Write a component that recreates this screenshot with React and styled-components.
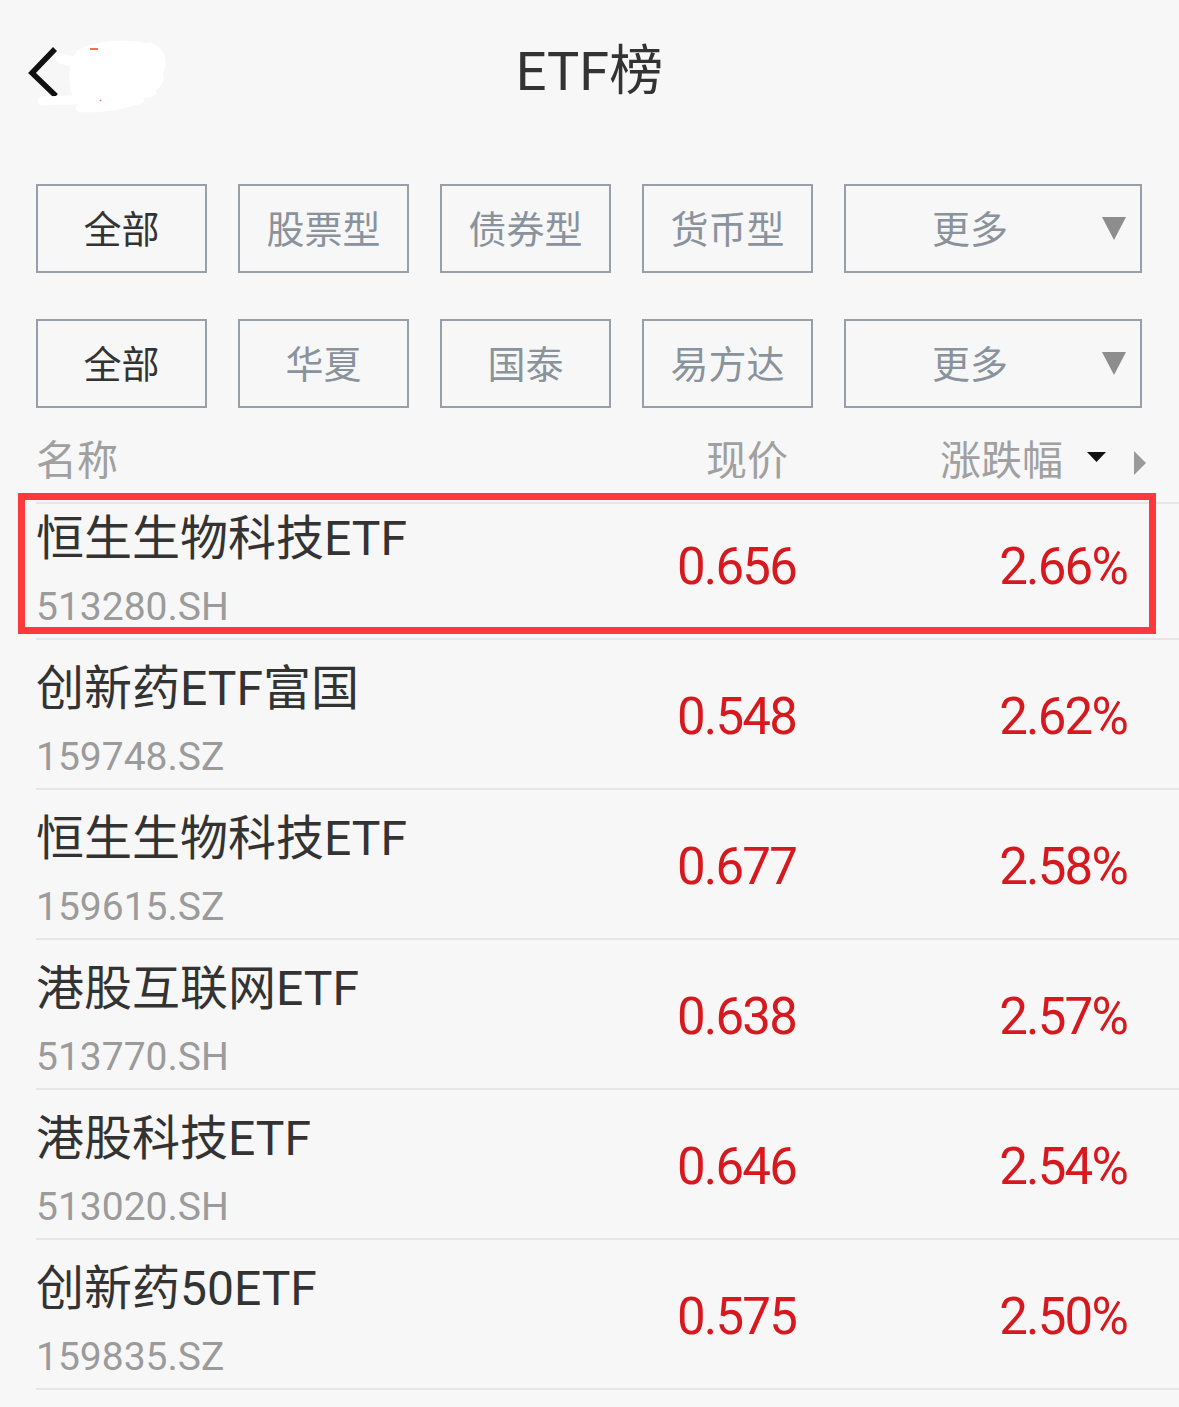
import React from "react";
import styled, { createGlobalStyle } from "styled-components";

const Global = createGlobalStyle`
  html, body { margin: 0; padding: 0; background: #f7f7f7; }
  * { box-sizing: border-box; }
`;

const FONT = `Roboto, "Noto Sans CJK SC", "Noto Sans", sans-serif`;

const Page = styled.div`
  width: 1179px;
  min-height: 1407px;
  background: #f7f7f7;
  font-family: ${FONT};
  overflow: hidden;
`;

const Nav = styled.header`
  height: 144px;
  display: grid;
  grid-template-columns: 1fr auto 1fr;
  align-items: center;
`;

const BackCell = styled.div`
  display: flex;
  align-items: center;
  padding-left: 20px;
`;

const Title = styled.h1`
  margin: 0;
  font-size: 54px;
  font-weight: 400;
  line-height: 1;
  color: #333;
  font-family: ${FONT};
`;

const Filters = styled.section`
  padding: 40px 37px 0 36px;
  display: flex;
  flex-direction: column;
  gap: 46px;
`;

const FilterRow = styled.div`
  display: grid;
  grid-template-columns: repeat(4, 171px) 1fr;
  column-gap: 31px;
`;

const Chip = styled.button`
  height: 89px;
  margin: 0;
  padding: 0 0 5px 0;
  border: 2px solid #989fa8;
  border-radius: 0;
  background: transparent;
  font-family: ${FONT};
  font-size: 38px;
  color: ${(p) => (p.$active ? "#333" : "#8a929c")};
  display: flex;
  align-items: center;
  justify-content: center;
`;

const MoreChip = styled(Chip)`
  padding-right: 14px;
`;

const MoreLabel = styled.span`
  flex: 1;
  text-align: center;
`;

const Caret = styled.svg`
  margin-left: 8px;
  margin-top: 4px;
  flex: none;
`;

const ColHeader = styled.div`
  margin-left: 36px;
  height: 96px;
  padding: 4px 33px 0 0;
  border-bottom: 2px solid #e6e6e6;
  display: grid;
  grid-template-columns: 1fr 260px 350px;
  align-items: center;
  font-size: 41px;
  color: #a0a0a0;
`;

const HeadPrice = styled.div`
  text-align: right;
  padding-right: 8px;
`;

const HeadChange = styled.div`
  display: flex;
  justify-content: flex-end;
  align-items: center;
`;

const SortIcon = styled.svg`
  margin-left: 24px;
  flex: none;
`;

const NextIcon = styled.svg`
  margin-left: 28px;
  margin-top: 12px;
  flex: none;
`;

const List = styled.div``;

const Row = styled.div`
  position: relative;
  margin-left: 36px;
  height: 150px;
  padding-right: 52px;
  border-bottom: 2px solid #e6e6e6;
  display: grid;
  grid-template-columns: 1fr 260px 331px;

  &:first-child {
    margin-top: -14px;
  }

  ${(p) =>
    p.$highlight &&
    `
    &::after {
      content: '';
      position: absolute;
      top: 3px;
      left: -18px;
      right: 23px;
      bottom: 4px;
      border: 7px solid #fd393c;
      pointer-events: none;
    }
  `}
`;

const NameBlock = styled.div`
  padding-top: 21px;
  display: flex;
  flex-direction: column;
`;

const Name = styled.div`
  font-size: 48px;
  line-height: 56px;
  color: #333;
  white-space: nowrap;
`;

const Code = styled.div`
  margin-top: 17px;
  font-size: 39px;
  line-height: 46px;
  color: #9b9b9b;
`;

const Num = styled.div`
  align-self: center;
  text-align: right;
  font-size: 51px;
  line-height: 1;
  padding-top: 4px;
  letter-spacing: -1.8px;
  color: #d6191f;
`;

const rows = [
  { name: "恒生生物科技ETF", code: "513280.SH", price: "0.656", pct: "2.66%", hl: true },
  { name: "创新药ETF富国", code: "159748.SZ", price: "0.548", pct: "2.62%" },
  { name: "恒生生物科技ETF", code: "159615.SZ", price: "0.677", pct: "2.58%" },
  { name: "港股互联网ETF", code: "513770.SH", price: "0.638", pct: "2.57%" },
  { name: "港股科技ETF", code: "513020.SH", price: "0.646", pct: "2.54%" },
  { name: "创新药50ETF", code: "159835.SZ", price: "0.575", pct: "2.50%" },
];

const DownCaret = () => (
  <Caret width="24" height="23" viewBox="0 0 24 23">
    <polygon points="0,0 24,0 12,23" fill="#8d8d8d" />
  </Caret>
);

const BackIcon = () => (
  <svg width="160" height="90" viewBox="20 27 160 90">
    <polyline
      points="55,49 32,73 56,96"
      fill="none"
      stroke="#111"
      strokeWidth="5.5"
      strokeLinejoin="miter"
    />
    <path
      d="M78 50 C95 40 130 38 150 44 C162 50 164 60 158 66 C166 72 166 84 156 90 C150 96 140 100 128 104 C110 110 90 110 78 104 C70 96 68 80 70 68 C72 60 74 54 78 50 Z"
      fill="#fff"
    />
    <g stroke="#fff" strokeLinecap="round" strokeLinejoin="round" fill="none">
      <path d="M60 58 C80 66 110 62 150 70" strokeWidth="10" />
      <path d="M42 101 C70 100 100 100 130 97 C140 95 148 93 152 92" strokeWidth="9" />
      <path d="M80 108 C100 110 120 106 140 100" strokeWidth="8" />
      <path d="M150 46 C160 52 164 60 160 70" strokeWidth="8" />
    </g>
    <path d="M90 49 L98 49" stroke="#f07050" strokeWidth="2" />
    <path d="M100 100 L101 101" stroke="#f07050" strokeWidth="1.5" />
  </svg>
);

export default function App() {
  const typeChips = ["股票型", "债券型", "货币型"];
  const brandChips = ["华夏", "国泰", "易方达"];
  return (
    <Page>
      <Global />
      <Nav>
        <BackCell>
          <BackIcon />
        </BackCell>
        <Title>ETF榜</Title>
        <div />
      </Nav>

      <Filters>
        <FilterRow>
          <Chip $active>全部</Chip>
          {typeChips.map((c) => (
            <Chip key={c}>{c}</Chip>
          ))}
          <MoreChip>
            <MoreLabel>更多</MoreLabel>
            <DownCaret />
          </MoreChip>
        </FilterRow>
        <FilterRow>
          <Chip $active>全部</Chip>
          {brandChips.map((c) => (
            <Chip key={c}>{c}</Chip>
          ))}
          <MoreChip>
            <MoreLabel>更多</MoreLabel>
            <DownCaret />
          </MoreChip>
        </FilterRow>
      </Filters>

      <ColHeader>
        <div>名称</div>
        <HeadPrice>现价</HeadPrice>
        <HeadChange>
          <span>涨跌幅</span>
          <SortIcon width="19" height="10" viewBox="0 0 19 10">
            <polygon points="0,0 19,0 9.5,10" fill="#111" />
          </SortIcon>
          <NextIcon width="12" height="24" viewBox="0 0 12 24">
            <polygon points="0,0 12,12 0,24" fill="#9a9a9a" />
          </NextIcon>
        </HeadChange>
      </ColHeader>

      <List>
        {rows.map((r, i) => (
          <Row key={i} $highlight={r.hl}>
            <NameBlock>
              <Name>{r.name}</Name>
              <Code>{r.code}</Code>
            </NameBlock>
            <Num>{r.price}</Num>
            <Num>{r.pct}</Num>
          </Row>
        ))}
      </List>
    </Page>
  );
}
